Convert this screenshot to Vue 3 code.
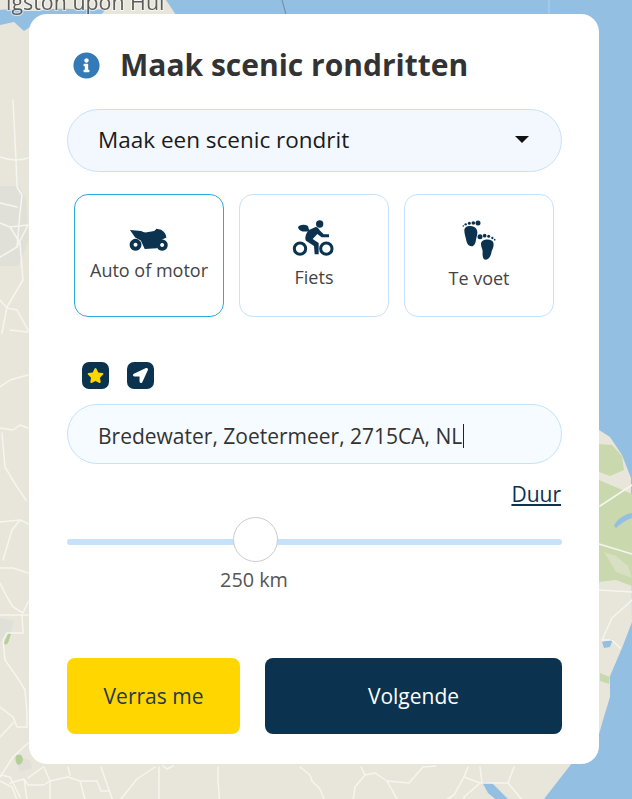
<template>
  <div class="page">
    <svg class="map" viewBox="0 0 632 799" width="632" height="799" aria-hidden="true">
      <rect width="632" height="799" fill="#93bfe2" />
      <!-- land -->
      <path
        d="M0 0H166L178 18V40H300V700L560 420L599 430L610 437L622 455L631 478L632 622L622 648L610 676L610 697L603 720L596 745L572 763L544 799H0Z"
        fill="#e8e6da"
      />
      <path d="M0 10C14 8 30 13 45 10C60 7 85 11 106 9L100 16C80 18 58 14 42 19L24 31L14 22L0 25Z" fill="#93bfe2" />
      <line x1="282" y1="0" x2="287" y2="18" stroke="#6f8ba0" stroke-width="1" />
      <line x1="549" y1="0" x2="549" y2="18" stroke="#b4d2e9" stroke-width="1" />
      <!-- built-up areas -->
      <path d="M0 186H20L26 200L29 240L18 266H0Z" fill="#e1e0d8" />
      <path d="M0 618L14 621L8 640L0 642Z" fill="#e1e0d8" />
      <path d="M14 756L30 760L32 768L20 772Z" fill="#e1e0d8" />
      <!-- woods -->
      <path d="M599 444L612 445L622 456L624 470L610 476L599 472Z" fill="#c9d9ad" />
      <path d="M599 480L632 494V586L616 580L599 582Z" fill="#c9d9ad" />
      <path d="M604 552L616 556L628 566L632 578L616 572Z" fill="#e8e6da" opacity=".5" />
      <path d="M600 673L610 677L609 684L600 681Z" fill="#c9d9ad" />
      <path d="M4 643L9 632L11 634L8 643L5 645Z" fill="#b3cf97" />
      <path d="M17 755C21 753 23 757 23 760C22 764 19 766 17 764C15 761 15 757 17 755Z" fill="#b3cf97" />
      <!-- lakes -->
      <path d="M614 526C617 518 626 514 632 513V518C626 520 620 524 616 528Z" fill="#93bfe2" />
      <path d="M602 642L613 639L610 647L604 648Z" fill="#93bfe2" />
      <path d="M482 782L492 783L508 799L516 807L500 803L488 793Z" fill="#93bfe2" />
      <!-- roads -->
      <g fill="none" stroke="#f6f5ef" stroke-width="1.5" stroke-linejoin="round" stroke-linecap="round">
        <path d="M13 100L16 160L17 187L22 195L20 213L17 247L0 257" />
        <path d="M0 157C8 160 18 161 28 158" />
        <path d="M0 203L17 207" />
        <path d="M0 223L10 227L28 225M10 227L20 243L23 280L7 307L2 333M17 247L28 225" />
        <path d="M0 300L7 308L17 310L28 330" />
        <path d="M10 330L28 332" />
        <path d="M0 387L10 380L28 375" />
        <path d="M0 428L13 430L20 425L28 428" />
        <path d="M2 433L5 467L17 487L26 500" />
        <path d="M0 522L20 520L12 530L3 560" />
        <path d="M20 520L29 524" />
        <path d="M0 568H13L28 573" />
        <path d="M0 583L7 597L13 607L23 613L28 602" />
        <path d="M0 615H28" />
        <path d="M22 615L23 633H7L3 640L5 660L17 677L25 690L27 713V727" />
        <path d="M0 707L13 717L17 727H27" />
        <path d="M0 737L13 723" />
        <path d="M28 743L13 757L0 777" />
        <path d="M0 775L10 777L20 797" />
        <path d="M28 778L43 767" />
        <path d="M0 781L12 787L20 807M10 783L24 779L28 807M24 779L28 785H44L50 781V807M44 767L50 781L68 777L80 781H97L101 791H109M87 807L80 781M101 767L115 807M68 767L70 775" />
        <path d="M155 767L137 779L121 799L117 807M159 767V807" />
        <path d="M163 766L167 769L173 766" />
        <path d="M218 767V780L220 807" />
        <path d="M300 767L310 775L312 781L320 789L327 807" />
        <path d="M361 767L365 775L355 787L353 801M365 775L375 773L387 781L397 799M387 781L409 783L423 767L436 766" />
        <path d="M468 767L464 777L454 795L435 807M464 777L480 783H508L514 767M508 783L528 807M480 783L464 797V807M480 767L482 783" />
        <path d="M599 544L632 554M599 590L632 592M632 485L600 506M632 600L612 618L602 640L612 640L620 648" />
      </g>
      <text x="6" y="10" class="map-label">igston upon Hul</text>
    </svg>

    <main class="card">
      <header class="head">
        <svg class="head__icon" viewBox="0 0 512 512" aria-hidden="true">
          <path d="M256 8C119.043 8 8 119.083 8 256c0 136.997 111.043 248 248 248s248-111.003 248-248C504 119.083 392.957 8 256 8zm0 110c23.196 0 42 18.804 42 42s-18.804 42-42 42-42-18.804-42-42 18.804-42 42-42zm56 254c0 6.627-5.373 12-12 12h-88c-6.627 0-12-5.373-12-12v-24c0-6.627 5.373-12 12-12h12v-64h-12c-6.627 0-12-5.373-12-12v-24c0-6.627 5.373-12 12-12h64c6.627 0 12 5.373 12 12v100h12c6.627 0 12 5.373 12 12v24z" />
        </svg>
        <h1 class="head__title">Maak scenic rondritten</h1>
      </header>

      <div class="select">
        <span>Maak een scenic rondrit</span>
        <i class="select__caret"></i>
      </div>

      <div class="modes">
        <button
          v-for="mode in modes"
          :key="mode.id"
          class="mode"
          :class="{ 'mode--active': mode.id === 'motor' }"
        >
          <svg v-if="mode.id === 'motor'" class="mode__icon mode__icon--motor" viewBox="178 112 120 70" aria-hidden="true">
            <path d="M180 118L214 121Q224 128 236 124L254 121L261 114L275 117Q290 127 291 141L280 146L270 152L262 174L225 176L213 150L196 141Z" />
            <path fill-rule="evenodd" d="M197 145a18 18 0 1 0 .01 0zM197 157a6 6 0 1 1-.01 0z" />
            <path fill-rule="evenodd" d="M278 147a17 17 0 1 0 .01 0zM278 158a6 6 0 1 1-.01 0z" />
          </svg>
          <svg v-else-if="mode.id === 'bike'" class="mode__icon mode__icon--bike" viewBox="0 0 150 135" aria-hidden="true">
            <circle cx="92" cy="27" r="11" />
            <circle cx="33" cy="101" r="17" fill="none" stroke="#0b3350" stroke-width="9" />
            <circle cx="112" cy="101" r="17" fill="none" stroke="#0b3350" stroke-width="9" />
            <path d="M27 38C29 29 46 27 57 33L61 47C48 52 33 51 27 38Z" />
            <path d="M58 46L80 36C86 36 90 42 92 46L104 58H120V67H98L85 57L71 72L89 84V118H77L75 93L51 77C47 71 49 60 58 46Z" />
          </svg>
          <svg v-else class="mode__icon mode__icon--foot" viewBox="184 88 102 120" aria-hidden="true">
            <path d="M191 119C191 107 208 103 221 109C233 116 231 130 227 142C225 154 223 167 212 167C202 167 198 156 196 146C194 136 191 128 191 119Z" />
            <circle cx="232" cy="97" r="7.5" /><circle cx="218" cy="97" r="5.5" /><circle cx="206" cy="98" r="4.5" /><circle cx="195" cy="101" r="3.5" /><circle cx="188" cy="106" r="2.5" />
            <path d="M241 158C243 147 262 143 274 150C282 156 279 170 273 182C271 196 265 207 255 207C246 207 245 194 246 184C246 174 240 168 241 158Z" />
            <circle cx="238" cy="138" r="7.5" /><circle cx="252" cy="135" r="5.5" /><circle cx="264" cy="137" r="4.5" /><circle cx="275" cy="142" r="3.5" /><circle cx="282" cy="147" r="2.5" />
          </svg>
          <span class="mode__label" :class="`mode__label--${mode.id}`">{{ mode.label }}</span>
        </button>
      </div>

      <div class="tools">
        <button class="tool">
          <svg viewBox="0 0 576 512" class="tool__star" aria-hidden="true">
            <path d="M259.3 17.8L194 150.2 47.9 171.5c-26.2 3.8-36.7 36.1-17.7 54.6l105.7 103-25 145.5c-4.5 26.3 23.2 46 46.4 33.7L288 439.6l130.7 68.7c23.2 12.2 50.9-7.4 46.4-33.7l-25-145.5 105.7-103c19-18.5 8.5-50.8-17.7-54.6L382 150.2 316.7 17.8c-11.7-23.6-45.6-23.9-57.4 0z" />
          </svg>
        </button>
        <button class="tool">
          <svg viewBox="0 0 512 512" class="tool__arrow" aria-hidden="true">
            <path d="M444.52 3.52L28.74 195.42c-47.97 22.39-31.98 92.75 19.19 92.75h175.91v175.91c0 51.17 70.36 67.17 92.75 19.19l191.9-415.78c15.99-38.39-25.59-79.97-63.97-63.97z" />
          </svg>
        </button>
      </div>

      <div class="address">
        <span>Bredewater, Zoetermeer, 2715CA, NL</span><i class="address__cursor"></i>
      </div>

      <div class="duration"><a class="duration__link" href="#">Duur</a></div>

      <div class="slider">
        <div class="slider__track"></div>
        <div class="slider__thumb"></div>
      </div>
      <div class="distance">250 km</div>

      <footer class="actions">
        <button class="btn btn--yellow">Verras me</button>
        <button class="btn btn--dark">Volgende</button>
      </footer>
    </main>
  </div>
</template>

<script setup>
const modes = [
  { id: 'motor', label: 'Auto of motor' },
  { id: 'bike', label: 'Fiets' },
  { id: 'foot', label: 'Te voet' }
]
</script>

<style scoped>
.page {
  position: relative;
  width: 632px;
  height: 799px;
  overflow: hidden;
  font-family: "Open Sans", "Noto Sans", sans-serif;
  color: #333;
}

.map {
  position: absolute;
  inset: 0;
  filter: blur(0.4px);
}

.map-label {
  font-family: "Open Sans", sans-serif;
  font-size: 21.4px;
  fill: #5c5c5c;
  stroke: #fff;
  stroke-opacity: 0.6;
  stroke-width: 2px;
  paint-order: stroke;
}

.card {
  position: relative;
  box-sizing: border-box;
  width: 570px;
  height: 750px;
  margin: 14px 0 0 29px;
  padding: 0 37px 0 38px;
  background: #fff;
  border-radius: 18px;
}

.head {
  display: flex;
  align-items: center;
  gap: 20px;
  height: 44px;
  padding: 29px 0 0 6px;
}

.head__icon {
  width: 27px;
  height: 27px;
  fill: #337ab7;
}

.head__title {
  margin: 0;
  font-size: 30px;
  font-weight: 700;
  line-height: 44px;
  color: #333;
}

.select {
  display: flex;
  align-items: center;
  justify-content: space-between;
  box-sizing: border-box;
  height: 63px;
  margin-top: 22px;
  padding: 0 32px 2px 30px;
  font-size: 22.5px;
  color: #1a1a1a;
  background: #f3f8fe;
  border: 1px solid #c5e2fa;
  border-radius: 32px;
}

.select__caret {
  width: 0;
  height: 0;
  border-left: 7px solid transparent;
  border-right: 7px solid transparent;
  border-top: 7px solid #111;
}

.modes {
  display: flex;
  gap: 15px;
  margin-top: 22px;
  padding: 0 7px;
}

.mode {
  display: flex;
  flex-direction: column;
  align-items: center;
  box-sizing: border-box;
  width: 150px;
  height: 123px;
  padding: 0;
  font-family: inherit;
  color: #444;
  background: #fff;
  border: 1px solid #c5e2fa;
  border-radius: 14px;
}

.mode--active {
  border-color: #2aa9e0;
}

.mode__icon {
  fill: #0b3350;
  flex: none;
}

.mode__icon--motor {
  width: 40px;
  height: 23px;
  margin-top: 33px;
}

.mode__icon--bike {
  width: 50px;
  height: 45px;
  margin-top: 20px;
}

.mode__icon--foot {
  width: 34px;
  height: 40px;
  margin-top: 25px;
}

.mode__label {
  font-size: 18px;
  line-height: 24px;
}

.mode__label--motor {
  margin-top: 7px;
}

.mode__label--bike {
  margin-top: 5px;
}

.mode__label--foot {
  margin-top: 6px;
}

.tools {
  display: flex;
  gap: 18px;
  margin-top: 45px;
  padding-left: 15px;
}

.tool {
  display: flex;
  align-items: center;
  justify-content: center;
  width: 27px;
  height: 27px;
  padding: 0;
  background: #0b3350;
  border: 0;
  border-radius: 7px;
}

.tool__star {
  width: 17px;
  height: 15px;
  fill: #ffd600;
}

.tool__arrow {
  width: 15px;
  height: 15px;
  fill: #fff;
}

.address {
  display: flex;
  align-items: center;
  box-sizing: border-box;
  height: 60px;
  margin-top: 15px;
  padding: 4px 30px 0;
  font-size: 21px;
  color: #333;
  background: #f6fbff;
  border: 1px solid #c5e2fa;
  border-radius: 30px;
}

.address__cursor {
  width: 1px;
  height: 24px;
  margin-left: 1px;
  background: #222;
}

.duration {
  margin-top: 16px;
  text-align: right;
  font-size: 21px;
  line-height: 28px;
}

.duration__link {
  margin-right: 1px;
  color: #0b3350;
  text-decoration: underline;
}

.slider {
  position: relative;
  height: 6px;
  margin-top: 31px;
}

.slider__track {
  height: 6px;
  background: #c5e2fa;
  border-radius: 3px;
}

.slider__thumb {
  position: absolute;
  top: -22px;
  left: 166px;
  box-sizing: border-box;
  width: 45px;
  height: 45px;
  background: #fff;
  border: 1px solid #ccc;
  border-radius: 50%;
}

.distance {
  width: 374px;
  margin-top: 23px;
  text-align: center;
  font-size: 19.8px;
  line-height: 24px;
  color: #555;
}

.actions {
  display: flex;
  gap: 25px;
  margin-top: 66px;
}

.btn {
  height: 76px;
  font-family: inherit;
  font-size: 21px;
  border: 0;
  border-radius: 8px;
}

.btn--yellow {
  width: 173px;
  color: #1f3a50;
  background: #ffd600;
}

.btn--dark {
  flex: 1;
  color: #fff;
  background: #0b3350;
}
</style>
